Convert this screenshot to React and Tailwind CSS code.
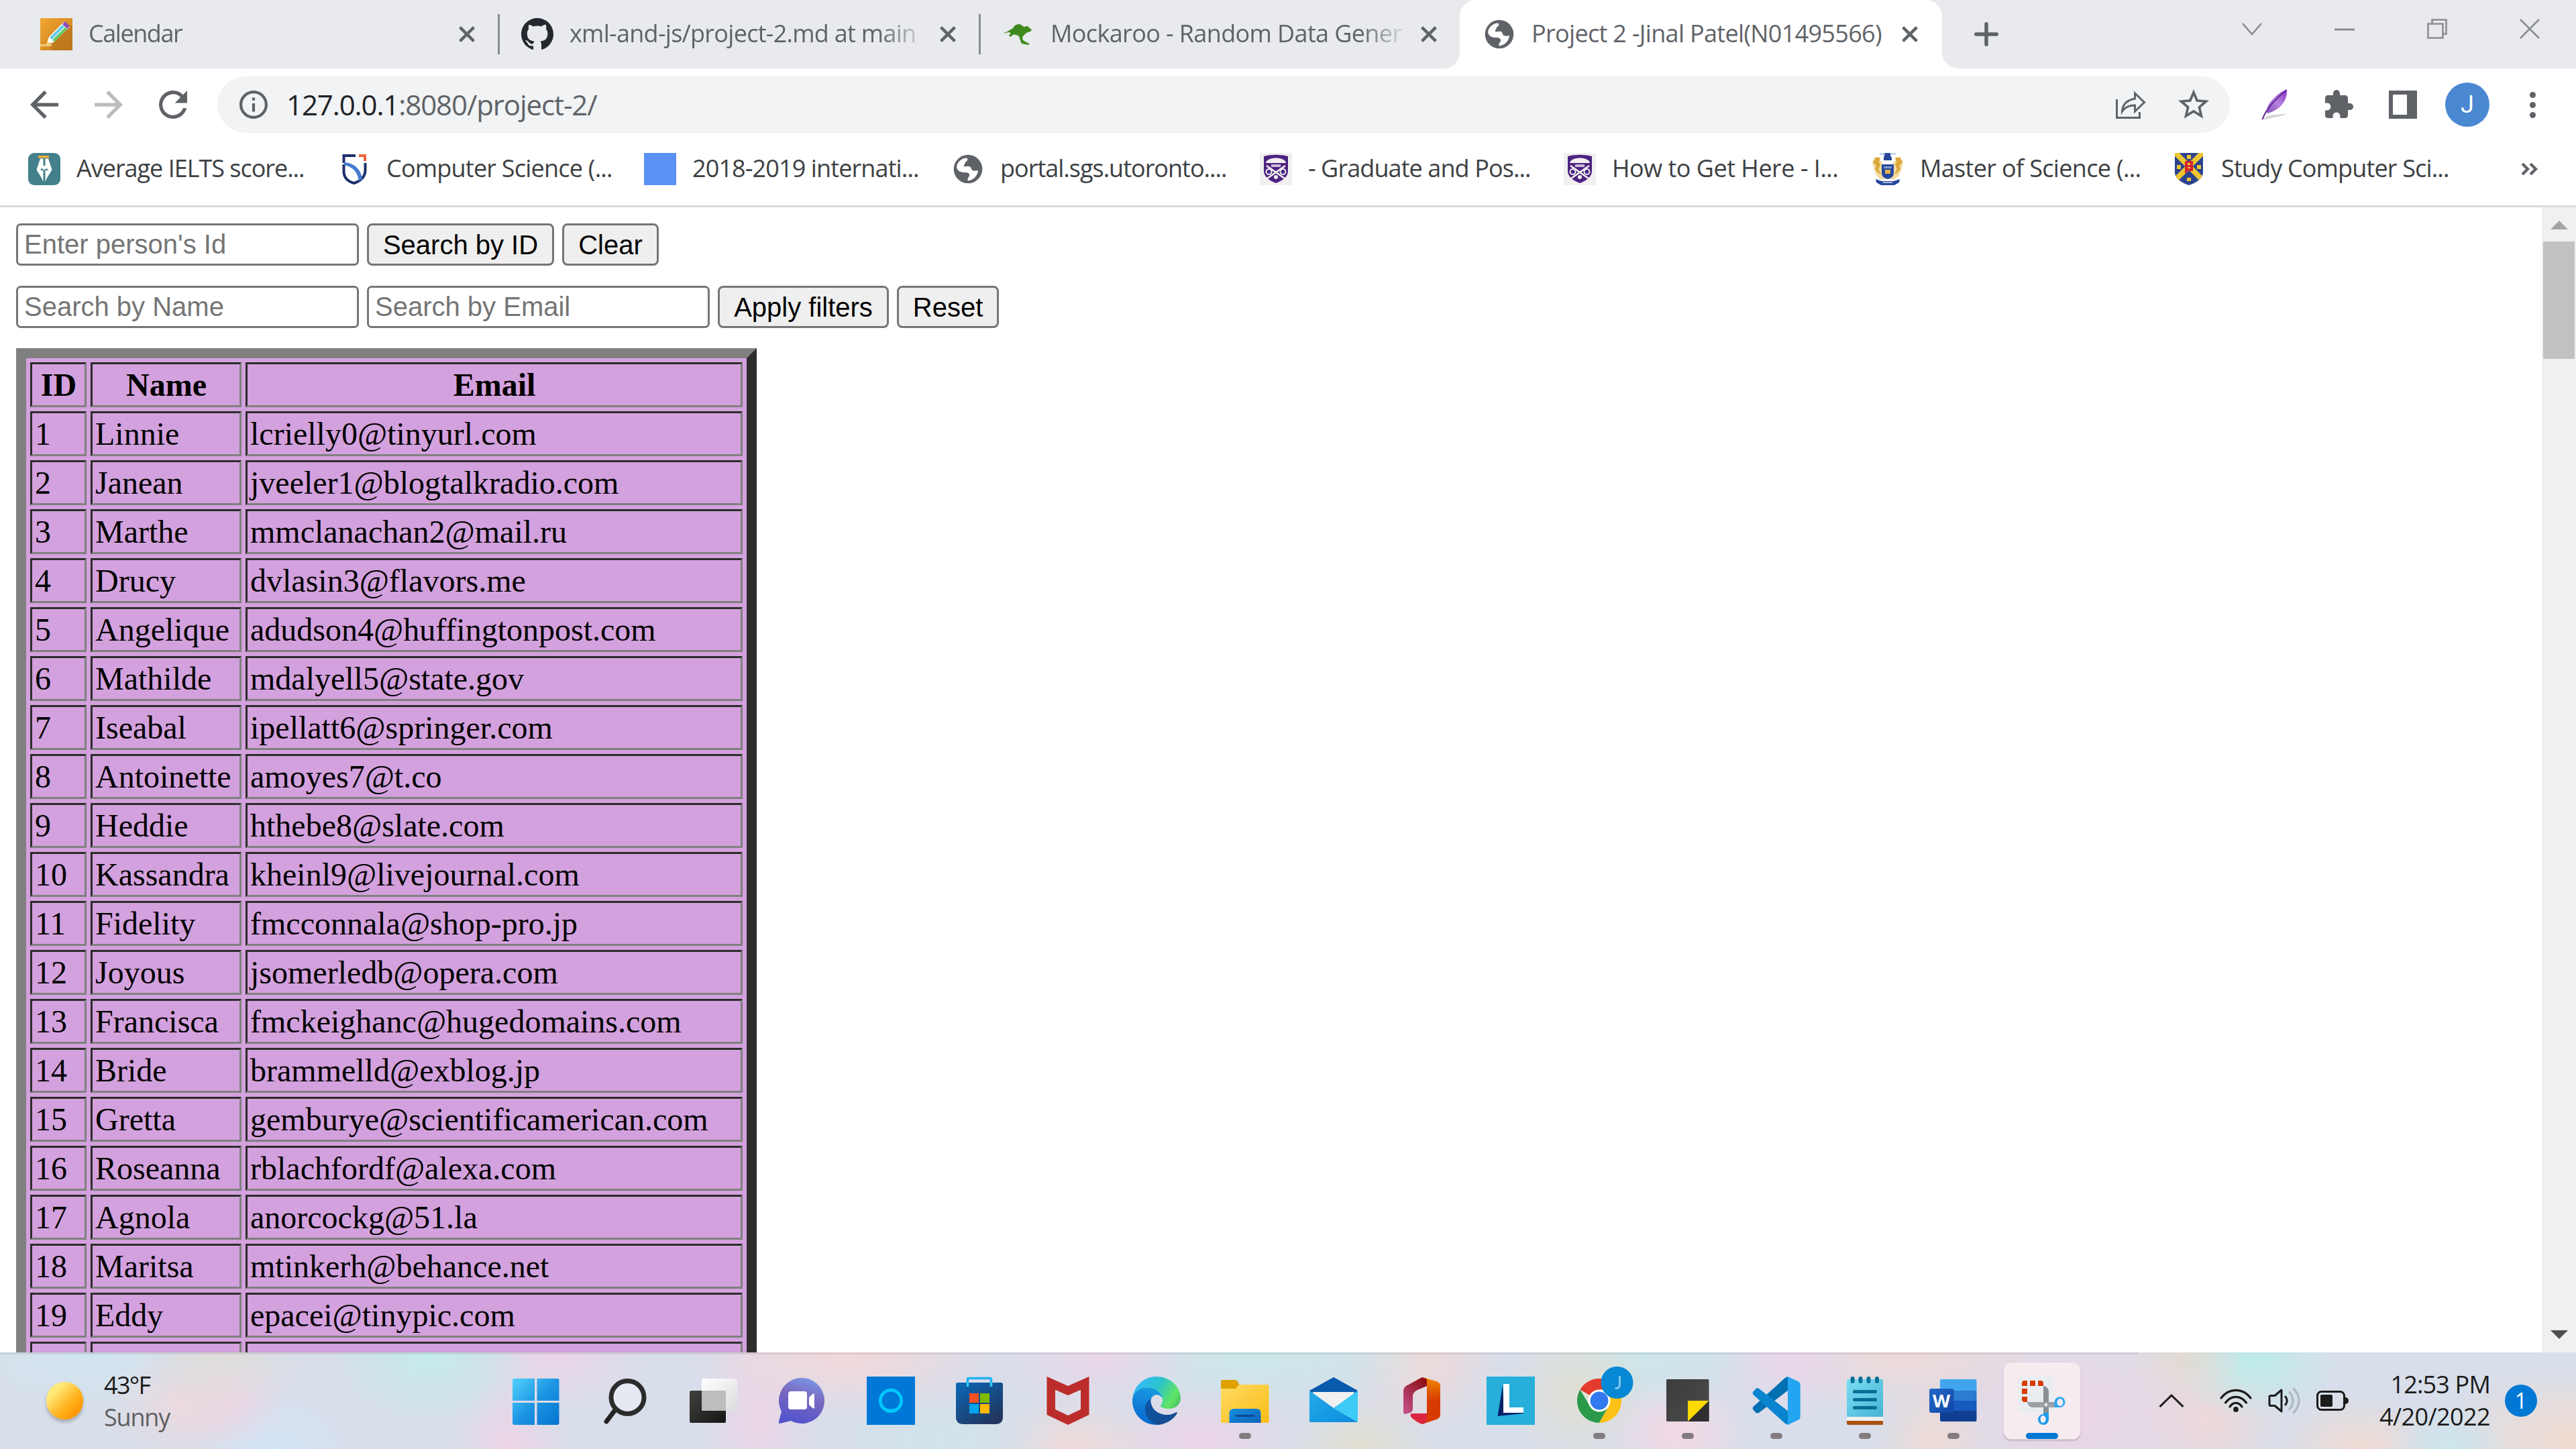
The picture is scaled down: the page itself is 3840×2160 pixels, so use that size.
import React from "react";

/* ---------- browser glyphs ---------- */

const Glyph = ({ box, className, d }) => (
  <svg viewBox={box} className={className} fill="currentColor">
    <path d={d} />
  </svg>
);

const CloseX = ({ className = "" }) => (
  <svg viewBox="0 0 24 24" className={"h-6 w-6 shrink-0 text-[#5f6368] " + className} fill="none" stroke="currentColor" strokeWidth="4.4">
    <path d="M1.6 1.6 22.4 22.4M22.4 1.6 1.6 22.4" />
  </svg>
);

const Globe = ({ className = "" }) => (
  <svg viewBox="0 0 48 48" className={"h-12 w-12 shrink-0 " + className}>
    <circle cx="24" cy="24" r="21.3" fill="#5f6368" />
    <path
      d="M7 21C8 13 15 7.500 22 7.500C24 9 24 11 21 13C19 14 20 17 18 18C17 20 19 21 22 20C26 19 29 21 29 24C30 27 34 27 39 26C38 34 33 40 24 41.500C22 39 25 37 26 34C27 31 24 29 19 29C13 29 8 27 7 21Z"
      fill="#fff"
    />
  </svg>
);

const PencilIcon = () => (
  <svg viewBox="0 0 48 48" className="h-12 w-12 shrink-0">
    <defs>
      <linearGradient id="pencilBg" x1="0" y1="0" x2="1" y2="1">
        <stop offset="0" stopColor="#f2a531" />
        <stop offset="1" stopColor="#c47c1d" />
      </linearGradient>
    </defs>
    <rect width="48" height="48" fill="url(#pencilBg)" />
    <path d="M10 39 44 10 48 14V48H18Z" fill="#b4701a" opacity=".6" />
    <path d="M0 40.500H17" stroke="#f4c67c" strokeWidth="3" />
    <path d="M9 40 13 28 36 5 44 13 20 36Z" fill="#fff" />
    <path d="M15.500 30.500 34.500 11.500" stroke="#5fc9ee" strokeWidth="4" />
    <path d="M19.500 34 38.500 15" stroke="#66c661" strokeWidth="4" />
    <path d="M33 9 37 5 44 12 40 16Z" fill="#8e4bb8" />
    <path d="M9 40 11 34 15 38Z" fill="#f7d36b" />
  </svg>
);

const GithubIcon = () => (
  <Glyph
    box="0 0 16 16"
    className="h-12 w-12 shrink-0 text-[#24292f]"
    d="M8 0C3.580 0 0 3.580 0 8c0 3.540 2.290 6.530 5.470 7.590.4.070.55-.17.55-.38 0-.19-.01-.82-.01-1.490-2.010.37-2.530-.49-2.690-.94-.09-.23-.48-.94-.82-1.130-.28-.15-.68-.52-.01-.53.63-.01 1.080.58 1.230.82.72 1.210 1.870.87 2.330.66.070-.52.28-.87.51-1.070-1.780-.2-3.640-.89-3.640-3.950 0-.87.31-1.590.82-2.150-.08-.2-.36-1.020.08-2.120 0 0 .67-.21 2.200.82.64-.18 1.320-.27 2-.27.68 0 1.360.09 2 .27 1.530-1.040 2.200-.82 2.200-.82.44 1.100.16 1.920.08 2.120.51.56.82 1.270.82 2.150 0 3.070-1.870 3.750-3.650 3.950.29.25.54.73.54 1.480 0 1.070-.01 1.930-.01 2.200 0 .21.15.46.55.38A8.012 8.012 0 0 0 16 8c0-4.420-3.580-8-8-8z"
  />
);

const KangarooIcon = () => (
  <svg viewBox="0 0 48 48" className="h-12 w-12 shrink-0" fill="#3f8a1d">
    <path d="M3 22C9 20 12 17 16 15C18 11 21 9 26 9C29 10 31 13 34 13L36 12 38 12 41 15 44 17 42 20 38 21C35 22 34 24 32 26C30 27 30 30 31 33L40 38V40L29 38C27 34 26 30 25 27C22 25 19 24 16 25L12 28 10 26 13 22C11 21 8 21 3 23Z" />
  </svg>
);

/* ---------- tabs ---------- */

const Tab = ({ icon, label, divider = true, track, width }) => (
  <div className={"flex h-[102px] items-center " + width}>
    <div className={"mr-8 h-[60px] w-[3px] " + (divider ? "bg-[#8a8d91]" : "bg-transparent")} />
    {icon}
    <div className="mb-0.5 ml-[24px] w-[525px] overflow-hidden whitespace-nowrap leading-[60px] text-[#5f6368] [mask-image:linear-gradient(to_right,black_88%,transparent_102%)]">
      <span className={track}>{label}</span>
    </div>
    <CloseX className="ml-[27px]" />
  </div>
);

const WinButton = ({ children }) => (
  <div className="flex h-[86px] w-[138px] items-center justify-center">
    <svg viewBox="0 0 30 30" className="h-[30px] w-[30px]" fill="none" stroke="#8b8d90" strokeWidth="2.600">
      {children}
    </svg>
  </div>
);

const TabStrip = () => (
  <div className="flex h-[102px] bg-[#e8eaed] pl-[25px] text-[36px]">
    <Tab icon={<PencilIcon />} label="Calendar" divider={false} track="tracking-[-1.44px]" width="w-[717px]" />
    <Tab icon={<GithubIcon />} label="xml-and-js/project-2.md at main" track="tracking-[-0.72px]" width="w-[717px]" />
    <Tab icon={<KangarooIcon />} label="Mockaroo - Random Data Genera" track="tracking-[-0.62px]" width="w-[717px]" />
    <div className="relative flex h-[102px] w-[719px] items-center rounded-t-[24px] bg-white pl-[35px]">
      <svg viewBox="0 0 24 24" className="absolute -left-6 bottom-0 h-6 w-6" fill="#fff">
        <path d="M24 0A24 24 0 0 1 0 24H24Z" />
      </svg>
      <svg viewBox="0 0 24 24" className="absolute -right-6 bottom-0 h-6 w-6" fill="#fff">
        <path d="M0 0A24 24 0 0 0 24 24H0Z" />
      </svg>
      <Globe />
      <div className="mb-0.5 ml-[24px] w-[528px] whitespace-nowrap leading-[60px] tracking-[-0.68px] text-[#5f6368]">
        Project 2 -Jinal Patel(N01495566)
      </div>
      <CloseX className="ml-[24px]" />
    </div>
    <svg viewBox="0 0 36 36" className="ml-12 h-9 w-9 self-center" stroke="#5f6368" strokeWidth="5.500" strokeLinecap="round">
      <path d="M18 2.700V33.300M2.700 18H33.300" />
    </svg>
    <div className="ml-auto flex">
      <WinButton><path d="M1 7 15 23 29 7" /></WinButton>
      <WinButton><path d="M0 16H30" strokeWidth="3" /></WinButton>
      <WinButton>
        <path d="M1.500 7.500H23.500V28.500H1.500ZM7.500 7V1.500H28.500V22.500H24" />
      </WinButton>
      <WinButton><path d="M1 1 29 29M29 1 1 29" /></WinButton>
    </div>
  </div>
);

/* ---------- toolbar ---------- */

const Toolbar = () => (
  <div className="flex h-[108px] items-center bg-white pl-[45px] text-[#5f6368]">
    <Glyph box="4 4 16 16" className="h-[42px] w-[42px]" d="M20 11H7.830l5.590-5.590L12 4l-8 8 8 8 1.410-1.410L7.830 13H20v-2z" />
    <Glyph box="4 4 16 16" className="ml-[54px] h-[42px] w-[42px] text-[#babcbe]" d="M12 4l-1.410 1.410L16.170 11H4v2h12.170l-5.580 5.590L12 20l8-8z" />
    <Glyph box="4 4 16 16" className="ml-[54px] h-[42px] w-[42px]" d="M17.650 6.350A7.958 7.958 0 0 0 12 4c-4.420 0-7.990 3.580-7.990 8s3.570 8 7.990 8c3.730 0 6.840-2.550 7.730-6h-2.080A5.990 5.990 0 0 1 12 18c-3.310 0-6-2.690-6-6s2.690-6 6-6c1.660 0 3.140.69 4.220 1.780L13 11h7V4l-2.350 2.350z" />
    <div className="ml-[45px] flex h-[84px] w-[3000px] items-center rounded-full bg-[#f1f3f4] pl-[33px] pr-[31px]">
      <Glyph box="2 2 20 20" className="h-[42px] w-[42px]" d="M11 7h2v2h-2V7zm0 4h2v6h-2v-6zm1-9C6.480 2 2 6.480 2 12s4.480 10 10 10 10-4.480 10-10S17.520 2 12 2zm0 18c-4.410 0-8-3.590-8-8s3.590-8 8-8 8 3.590 8 8-3.590 8-8 8z" />
      <div className="mb-px ml-[28px] text-[42px] leading-[60px] tracking-[-1.1px]">
        <span className="text-[#202124]">127.0.0.1</span>
        <span>:8080/project-2/</span>
      </div>
      <svg viewBox="0 0 48 48" className="ml-auto h-12 w-12" fill="none" stroke="currentColor" strokeWidth="3">
        <path d="M3.500 16V43.500H37.500V35" />
        <path d="M30.500 7V15C20 17 12 23 11.500 34C16 27 22 25 30.500 25V34L44.500 20.500Z" strokeLinejoin="miter" />
      </svg>
      <Glyph box="2 2 20 20" className="ml-[47px] h-[46px] w-[46px]" d="M22 9.240l-7.190-.62L12 2 9.190 8.630 2 9.240l5.460 4.730L5.820 21 12 17.270 18.180 21l-1.630-7.030L22 9.240zM12 15.400l-3.760 2.270 1-4.280-3.320-2.880 4.380-.38L12 6.100l1.710 4.040 4.380.38-3.320 2.880 1 4.280L12 15.400z" />
    </div>
    <svg viewBox="0 0 48 48" className="ml-[42px] h-12 w-12">
      <defs>
        <linearGradient id="feather" x1="1" y1="0" x2="0" y2="1">
          <stop offset="0" stopColor="#8a35c4" />
          <stop offset=".5" stopColor="#b583dc" />
          <stop offset="1" stopColor="#8a50c0" />
        </linearGradient>
      </defs>
      <path d="M8 46C16 37 26 40 43 37C35 43 22 42 8 47Z" fill="#d6d6d9" />
      <path d="M43 1C44 17 35 31 14 37C11 34 14 25 21 17C28 9 36 4 43 1Z" fill="url(#feather)" />
      <path d="M42 3C29 13 13 28 6.500 46" fill="none" stroke="#6a2aa2" strokeWidth="2.200" />
    </svg>
    <Glyph box="0 0 24 24" className="ml-[48px] h-12 w-12" d="M20.500 11H19V7c0-1.100-.9-2-2-2h-4V3.500C13 2.120 11.880 1 10.500 1S8 2.120 8 3.500V5H4c-1.100 0-1.990.9-1.990 2v3.800H3.500c1.490 0 2.700 1.210 2.700 2.700s-1.210 2.700-2.700 2.700H2V20c0 1.100.9 2 2 2h3.800v-1.500c0-1.490 1.210-2.700 2.700-2.700 1.490 0 2.700 1.210 2.700 2.700V22H17c1.100 0 2-.9 2-2v-4h1.500c1.380 0 2.500-1.120 2.500-2.500S21.880 11 20.500 11z" />
    <div className="ml-[51px] h-[42px] w-[42px] border-y-[6px] border-l-[6px] border-r-[15px] border-[#5f6368]" />
    <div className="ml-[42px] flex h-[66px] w-[66px] items-center justify-center rounded-full bg-[#4a88d2] font-['Roboto',sans-serif] text-[36px] text-white">J</div>
    <div className="ml-[60px] flex flex-col gap-[6px]">
      <div className="h-[9px] w-[9px] rounded-full bg-[#5f6368]" />
      <div className="h-[9px] w-[9px] rounded-full bg-[#5f6368]" />
      <div className="h-[9px] w-[9px] rounded-full bg-[#5f6368]" />
    </div>
  </div>
);

/* ---------- bookmarks ---------- */

const NibIcon = () => (
  <svg viewBox="0 0 48 48" className="h-12 w-12 shrink-0">
    <rect width="48" height="48" rx="9" fill="#43808c" />
    <path d="M15 4H31V7.500H15Z" fill="#efb13a" />
    <path d="M18 8.500H22.500V20L18 26H22.500V43C20 36 15 30 12.500 25Z" fill="#fff" />
    <path d="M30 8.500H25.500V20L30 26H25.500V43C28 36 33 30 35.500 25Z" fill="#fff" />
    <circle cx="24" cy="22" r="3" fill="#fff" />
  </svg>
);

const CrestIcon = () => (
  <svg viewBox="0 0 48 48" className="h-12 w-12 shrink-0" fill="none">
    <path d="M26 4H8.500V15" stroke="#1d2f6b" strokeWidth="4" />
    <path d="M31 2H42V12H38V6H31Z" fill="#f0643c" />
    <path d="M8.500 17V28C9 38 16 43 24 45C33 42 40 37 40.500 26V15" stroke="#1d2f6b" strokeWidth="4" />
    <path d="M9 14C24 15 34 24 36 39L31 42C29 28 22 21 9 18Z" fill="#4479d0" />
  </svg>
);

const BlueSquare = () => <div className="h-12 w-12 shrink-0 bg-[#5b90f5]" />;

const PurpleShield = () => (
  <svg viewBox="0 0 48 48" className="h-12 w-12 shrink-0">
    <rect width="48" height="48" fill="#f2eff0" />
    <path d="M6 5C16 2 32 2 42 5V28C41 37 32 42 24 45C16 42 7 37 6 28Z" fill="#4b2380" />
    <path d="M9 15C10 5 38 5 39 15Z" fill="#f2eff0" />
    <path d="M17 17H31V21H17Z" fill="#cbbbe0" />
    <path d="M10 19 37 38M38 19 11 38" stroke="#f2eff0" strokeWidth="2.600" />
    <circle cx="13.500" cy="28" r="4" fill="none" stroke="#f2eff0" strokeWidth="2" />
    <circle cx="34.500" cy="28" r="4" fill="none" stroke="#f2eff0" strokeWidth="2" />
    <circle cx="24" cy="36" r="3" fill="#f2eff0" />
  </svg>
);

const GoldCrest = () => (
  <svg viewBox="0 0 48 48" className="h-12 w-12 shrink-0">
    <path d="M12 0H36V3H12Z" fill="#c4d4ec" />
    <path d="M20 0H28V4L30 7V11H18V7Z" fill="#27489b" />
    <path d="M5 6H13V12L16 14V32L20 38 15 40 8 35 4 26 1 14Z" fill="#f3dca0" />
    <path d="M43 6H35V12L32 14V32L28 38 33 40 40 35 44 26 47 14Z" fill="#f3dca0" />
    <path d="M6 7H12L11 14 13 18 10 24 14 31 10 30 5 24 7 19 2 14Z" fill="#dca83c" />
    <path d="M42 7H36L37 14 35 18 38 24 34 31 38 30 43 24 41 19 46 14Z" fill="#dca83c" />
    <path d="M15 17H33V30C33 35 29 38 24 39C19 38 15 35 15 30Z" fill="#27489b" />
    <path d="M18 20H30V23H18Z" fill="#7c98d4" />
    <rect x="20" y="25" width="8" height="6" fill="#e0b04a" />
    <path d="M6 39 15 42H33L42 39 41 44 34 48H14L7 44Z" fill="#27489b" />
    <path d="M17 43H31V45H17Z" fill="#a9bde2" />
  </svg>
);

const SaltireShield = () => (
  <svg viewBox="0 0 48 48" className="h-12 w-12 shrink-0">
    <clipPath id="saltire"><path d="M3 0H45V30C44 39 34 45 24 48C14 45 4 39 3 30Z" /></clipPath>
    <g clipPath="url(#saltire)">
      <rect width="48" height="48" fill="#2b438f" />
      <path d="M3 -1 45 41M45 -1 3 41" stroke="#edc531" strokeWidth="8" />
      <path d="M21 3H27V9H21ZM6 18H12V24H6ZM36 18H42V24H36ZM21 37H27V42H21Z" fill="#edc531" />
      <path d="M18 12H30V27H21V30H18Z" fill="#d8232e" />
      <path d="M22 15H26V18H22ZM22 21H26V23H22Z" fill="#edc531" />
    </g>
  </svg>
);

const BOOKMARKS = [
  [NibIcon, "Average IELTS score...", "w-[462px]", "tracking-[-1.02px]"],
  [CrestIcon, "Computer Science (...", "w-[456px]", "tracking-[-0.78px]"],
  [BlueSquare, "2018-2019 internati...", "w-[459px]", "tracking-[-0.88px]"],
  [Globe, "portal.sgs.utoronto....", "w-[459px]", "tracking-[-1px]"],
  [PurpleShield, "- Graduate and Pos...", "w-[453px]", "tracking-[-0.91px]"],
  [PurpleShield, "How to Get Here - I...", "w-[459px]", "tracking-[-0.5px]"],
  [GoldCrest, "Master of Science (...", "w-[447px]", "tracking-[-0.66px]"],
  [SaltireShield, "Study Computer Sci...", "w-[521px] pl-0.5", "tracking-[-0.85px]"],
];

const Bookmarks = () => (
  <div className="flex h-[99px] items-center border-b-[3px] border-[#d9dbde] bg-white pb-3 pl-[42px] text-[36px] text-[#3c4043]">
    {BOOKMARKS.map(([Icon, label, width, track]) => (
      <div key={label} className={"flex items-center " + width}>
        <Icon />
        <span className={"mb-0.5 ml-[24px] whitespace-nowrap leading-[48px] " + track}>{label}</span>
      </div>
    ))}
    <svg viewBox="0 0 26 18" className="h-[18px] w-[26px]" fill="none" stroke="#5f6368" strokeWidth="4.200">
      <path d="M2 1 10 9 2 17M14 1 22 9 14 17" />
    </svg>
  </div>
);

/* ---------- page ---------- */

const PEOPLE = [
  ["1", "Linnie", "lcrielly0@tinyurl.com"],
  ["2", "Janean", "jveeler1@blogtalkradio.com"],
  ["3", "Marthe", "mmclanachan2@mail.ru"],
  ["4", "Drucy", "dvlasin3@flavors.me"],
  ["5", "Angelique", "adudson4@huffingtonpost.com"],
  ["6", "Mathilde", "mdalyell5@state.gov"],
  ["7", "Iseabal", "ipellatt6@springer.com"],
  ["8", "Antoinette", "amoyes7@t.co"],
  ["9", "Heddie", "hthebe8@slate.com"],
  ["10", "Kassandra", "kheinl9@livejournal.com"],
  ["11", "Fidelity", "fmcconnala@shop-pro.jp"],
  ["12", "Joyous", "jsomerledb@opera.com"],
  ["13", "Francisca", "fmckeighanc@hugedomains.com"],
  ["14", "Bride", "brammelld@exblog.jp"],
  ["15", "Gretta", "gemburye@scientificamerican.com"],
  ["16", "Roseanna", "rblachfordf@alexa.com"],
  ["17", "Agnola", "anorcockg@51.la"],
  ["18", "Maritsa", "mtinkerh@behance.net"],
  ["19", "Eddy", "epacei@tinypic.com"],
  ["", "", ""],
];

const cell = "h-[67px] border-[3px] border-t-[#2c2c2c] border-l-[#2c2c2c] border-r-[#808080] border-b-[#808080] py-[3px] pl-1 pr-[3px] leading-[55px] whitespace-nowrap";

const Field = ({ hint }) => (
  <input
    placeholder={hint}
    className="h-[63px] w-[511px] rounded-[7px] border-[3px] border-[#767676] bg-white pl-[9px] text-[40px] leading-[48px] placeholder:text-[#757575]"
  />
);

const Btn = ({ width, children }) => (
  <button className={"flex h-[63px] items-center justify-center rounded-[8px] border-[3px] border-[#767676] bg-[#efefef] text-[40px] leading-[48px] text-black " + width}>
    {children}
  </button>
);

const Page = () => (
  <div className="flex h-[1707px] overflow-hidden bg-white">
    <div className="grow p-6 font-['Liberation_Sans',Arial,sans-serif]">
      <div className="flex gap-3">
        <Field hint="Enter person's Id" />
        <Btn width="w-[279px]">Search by ID</Btn>
        <Btn width="w-[144px]">Clear</Btn>
      </div>
      <div className="mt-[30px] flex gap-3">
        <Field hint="Search by Name" />
        <Field hint="Search by Email" />
        <Btn width="w-[255px]">Apply filters</Btn>
        <Btn width="w-[152px]">Reset</Btn>
      </div>
      <table className="mt-[30px] w-[1104px] table-fixed border-separate border-spacing-[6px] border-[15px] border-t-[#808080] border-l-[#808080] border-r-[#2c2c2c] border-b-[#2c2c2c] bg-[#d3a1dd] font-['Liberation_Serif','Times_New_Roman',serif] text-[48px] text-black">
        <thead>
          <tr>
            <th className={"w-[84px] " + cell}>ID</th>
            <th className={"w-[225px] " + cell}>Name</th>
            <th className={"w-[741px] " + cell}>Email</th>
          </tr>
        </thead>
        <tbody>
          {PEOPLE.map(([id, name, email], i) => (
            <tr key={i}>
              <td className={cell}>{id}</td>
              <td className={cell}>{name}</td>
              <td className={cell}>{email}</td>
            </tr>
          ))}
        </tbody>
      </table>
    </div>
    <div className="flex w-[51px] shrink-0 flex-col items-center bg-[#f0f0f0]">
      <svg viewBox="0 0 26 13" className="mt-5 h-[13px] w-[26px]" fill="#a3a3a3"><path d="M13 0 26 13H0Z" /></svg>
      <div className="mt-[18px] h-[175px] w-[47px] bg-[#c1c1c1]" />
      <svg viewBox="0 0 26 13" className="mb-5 mt-auto h-[13px] w-[26px]" fill="#505050"><path d="M13 13 26 0H0Z" /></svg>
    </div>
  </div>
);

/* ---------- taskbar icons, each drawn in a 72px box ---------- */

const Grad = ({ id, from, to, x1 = 0, y1 = 0, x2 = 1, y2 = 1 }) => (
  <linearGradient id={id} x1={x1} y1={y1} x2={x2} y2={y2}>
    <stop offset="0" stopColor={from} />
    <stop offset="1" stopColor={to} />
  </linearGradient>
);

const ICONS = [
  {
    name: "start",
    art: (
      <>
        <linearGradient id="winG" gradientUnits="userSpaceOnUse" x1="0" y1="3" x2="70" y2="72">
          <stop offset="0" stopColor="#50d2fd" />
          <stop offset=".5" stopColor="#1d95e3" />
          <stop offset="1" stopColor="#0574d1" />
        </linearGradient>
        <path d="M3 3H33V36H0V6Q0 3 3 3ZM36.500 3H66.500Q69.500 3 69.500 6V36H36.500ZM0 39H33V72H3Q0 72 0 69ZM36.500 39H69.500V69Q69.500 72 66.500 72H36.500Z" fill="url(#winG)" />
      </>
    ),
  },
  {
    name: "search",
    art: (
      <>
        <path d="M23 47 8 67" stroke="#222" strokeWidth="7" strokeLinecap="round" />
        <circle cx="39.500" cy="31" r="24.500" fill="#e6e8f2" stroke="#2b2b2b" strokeWidth="7" />
      </>
    ),
  },
  {
    name: "task view",
    art: (
      <>
        <Grad id="tvD" from="#42423f" to="#151515" />
        <Grad id="tvL" from="#ffffff" to="#dcdcdc" />
        <rect x="0" y="21" width="54" height="48" rx="2.500" fill="url(#tvD)" />
        <rect x="18" y="3" width="53" height="48" rx="2.500" fill="url(#tvL)" />
        <path d="M18 21H54V51H20.500Q18 51 18 48.500Z" fill="#bdbdbd" />
      </>
    ),
  },
  {
    name: "chat",
    art: (
      <>
        <linearGradient id="chatG" x1=".8" y1="0" x2=".5" y2="1">
          <stop offset="0" stopColor="#7b9bea" />
          <stop offset=".45" stopColor="#7a68c0" />
          <stop offset="1" stopColor="#5455cc" />
        </linearGradient>
        <path d="M35 2A34 34 0 1 1 19 66L3 70Q0 70 1 67L5 52A34 34 0 0 1 35 2Z" fill="url(#chatG)" />
        <rect x="15" y="22" width="28" height="27" rx="4" fill="#fff" />
        <path d="M46 31 52 25.500Q54 25 54 27V46Q54 48 52 47.500L46 42Z" fill="#fff" />
      </>
    ),
  },
  {
    name: "alexa",
    art: (
      <>
        <rect width="72" height="72" fill="#0078d7" />
        <circle cx="36" cy="36" r="15.700" fill="none" stroke="#00caff" strokeWidth="4.600" />
        <path d="M28 47C31 52 34 52 34 54L40 51 42 47 37 49Z" fill="#00caff" />
      </>
    ),
  },
  {
    name: "store",
    art: (
      <>
        <Grad id="stG" from="#0a68b8" to="#22365f" x2=".7" />
        <path d="M18.500 14V4Q18.500 2.500 20 2.500H52Q53.500 2.500 53.500 4V14" fill="none" stroke="#22b4f2" strokeWidth="3.600" />
        <path d="M4 9H68Q71 9 71 12V60Q71 71 60 71H12Q1 71 1 60V12Q1 9 4 9Z" fill="url(#stG)" />
        <path d="M18.500 9V15M53.500 9V15" stroke="#2fcbf5" strokeWidth="3.600" />
        <path d="M21 25H35V39H21Z" fill="#f25022" />
        <path d="M37 25H51V39H37Z" fill="#7fba00" />
        <path d="M21 41H35V55H21Z" fill="#00a4ef" />
        <path d="M37 41H51V55H37Z" fill="#ffb900" />
      </>
    ),
  },
  {
    name: "mcafee",
    art: <path fillRule="evenodd" d="M4.500 0 36 14 67.500 0V57L36 72 4.500 57ZM17 19.700V49L36 58 55 49V19.700L36 28Z" fill="#bc2c2b" />,
  },
  {
    name: "edge",
    art: (
      <>
        <Grad id="edB" from="#1a9ae0" to="#0667cf" x1=".6" y1="0" x2=".4" y2="1" />
        <Grad id="edD" from="#0d56a6" to="#154a8f" />
        <linearGradient id="edG" x1="0" y1=".3" x2="1" y2=".7">
          <stop offset="0" stopColor="#38b9fb" />
          <stop offset=".45" stopColor="#2cc3cf" />
          <stop offset=".85" stopColor="#5fe561" />
          <stop offset="1" stopColor="#4fc765" />
        </linearGradient>
        <path d="M0 36C0 27 6 19 17 16C30 14 44 22 45 33C43 29 40 27 36.500 27C31 27 27 32 27 38L32 52 46 70C43 71.500 40 72 36 72C16 72 0 56 0 36Z" fill="url(#edB)" />
        <path d="M27.500 33C21 37 18 44 19 51C20.500 62 29 72 41 71.500C53 70 63 62 67 54.500Q67 52.500 64.500 53.500C59 56.500 55 57 50 57C37 56 26 47 27.500 33Z" fill="url(#edD)" />
        <path d="M0.500 31C3 13 18 0 36 0C57 0 72 16 72 32C72 42 64 48 55 48C48 48 42 46 42 43.500C42 42 45 40 45 36C45 26 37 17 25 17C13 16 5 20 0.500 31Z" fill="url(#edG)" />
      </>
    ),
  },
  {
    name: "explorer",
    run: true,
    art: (
      <>
        <Grad id="foY" from="#ffdb66" to="#fbbd13" />
        <Grad id="foB" from="#1490df" to="#0f62b8" />
        <path d="M2 5H20Q24 5 26 9L28 14V18H0V7Q0 5 2 5Z" fill="#dfa000" />
        <path d="M0 18H22Q26 12 30 12H69.500Q71.500 12 71.500 14V67Q71.500 69 69.500 69H2Q0 69 0 67Z" fill="url(#foY)" />
        <path d="M12.500 69V55Q12.500 48 19 48H53Q59.500 48 59.500 55V69Z" fill="url(#foB)" />
        <path d="M22.500 58.500H49" stroke="#0b4a93" strokeWidth="3" strokeLinecap="round" />
      </>
    ),
  },
  {
    name: "mail",
    art: (
      <>
        <Grad id="maA" from="#27ace8" to="#0a8ade" />
        <path d="M36 1 72 21V34H0V21Z" fill="#0a5aad" />
        <path d="M5 23H66.500V30L36 46 5 30Z" fill="#f1f1f1" />
        <path d="M0 21 36 47 72 68H2Q0 68 0 66Z" fill="url(#maA)" />
        <path d="M72 21V68L36 47Z" fill="#3dcaf6" />
      </>
    ),
  },
  {
    name: "office",
    art: (
      <>
        <Grad id="ofR" from="#8d0f12" to="#c2528d" x1=".8" y1="0" x2=".1" y2="1" />
        <Grad id="ofO" from="#f28a00" to="#d83b01" x2="0" y2=".5" />
        <path d="M36 1 43 3V14L29 20Q22 23 22 30V48Q22 52 18 54L11 56Q8 56 8 52V22Q8 17 12 14Z" fill="url(#ofR)" />
        <path d="M36 1 57 7Q63 9 63 14V57Q63 62 57 64L36 71 43 63V4Z" fill="url(#ofO)" />
        <path d="M20 55H43V66Q41 70 36 71C30 69 24 65 20 61Q17 57 20 55Z" fill="#dd2540" />
      </>
    ),
  },
  {
    name: "L",
    art: (
      <>
        <rect width="72" height="72" fill="#27aedb" />
        <path d="M24 13 16.500 59 55 55V50H26Z" fill="#04246a" />
        <path d="M25 11H34V46H55V54H25Z" fill="#fff" />
      </>
    ),
  },
  {
    name: "chrome",
    run: true,
    art: (
      <>
        <path d="M36 36 7.400 19.500A33 33 0 0 1 64.600 19.500H36Z" fill="#e33b2e" />
        <path d="M7.400 19.500A33 33 0 0 0 36 69L50 44 22 44Z" fill="#2a9a49" />
        <path d="M64.600 19.500A33 33 0 0 1 36 69L51 43 36 19.500Z" fill="#fbc116" />
        <circle cx="36" cy="36" r="16.500" fill="#fff" />
        <circle cx="36" cy="36" r="13.400" fill="#3079ee" />
        <circle cx="62.500" cy="9" r="24" fill="#0688d4" />
        <path d="M66.500 -1V12Q66.500 18 59.500 17.500" fill="none" stroke="#7cc4ec" strokeWidth="3.200" />
      </>
    ),
  },
  {
    name: "sticky",
    run: true,
    art: (
      <>
        <Grad id="snG" from="#3c3c3c" to="#4c4c4c" />
        <rect x="4" y="4" width="63.500" height="63" rx="1.500" fill="url(#snG)" />
        <path d="M36 67V36H67.500V67Z" fill="#2e2e2e" />
        <path d="M36 67V36H67.500Z" fill="#ffd800" />
      </>
    ),
  },
  {
    name: "vscode",
    run: true,
    art: (
      <>
        <path d="M53 0 54 20 10 54Q7 55.500 5 53.500L1 49Q0 47 1.500 45L49 2Z" fill="#0070b3" />
        <path d="M53 72 54 52 10 18Q7 16.500 5 18.500L1 23Q0 25 1.500 27L49 70Z" fill="#0a84cf" />
        <path d="M53 0 69 7.500Q71.700 9 71.700 12V60Q71.700 63 69 64.500L53 72Z" fill="#24a5f2" />
      </>
    ),
  },
  {
    name: "notepad",
    run: true,
    art: (
      <>
        <Grad id="npG" from="#7cdcf4" to="#46b4d4" />
        <path d="M9 50H63V72H11Q9 72 9 70Z" fill="#ab520d" />
        <path d="M9 56H63V66H9Z" fill="#efefef" />
        <path d="M11 4H61Q63 4 63 6V60H9V6Q9 4 11 4Z" fill="url(#npG)" />
        <path d="M17.600 3V7M29.500 3V7M41.500 3V7M54 3V7" stroke="#076f95" strokeWidth="6" strokeLinecap="round" />
        <path d="M20.500 22.500H51.500M20.500 34.500H51.500M20.500 46.500H51.500" stroke="#076f95" strokeWidth="5" strokeLinecap="round" />
      </>
    ),
  },
  {
    name: "word",
    run: true,
    art: (
      <>
        <Grad id="woG" from="#2368c6" to="#1146a5" />
        <path d="M18 4H68.500Q70.500 4 70.500 6V21H16V6Q16 4 18 4Z" fill="#41a5ee" />
        <path d="M16 21H70.500V36H16Z" fill="#2b7cd3" />
        <path d="M16 36H70.500V51H16Z" fill="#185abd" />
        <path d="M16 51H70.500V65Q70.500 67 68.500 67H18Q16 67 16 65Z" fill="#103f91" />
        <rect x="0" y="18" width="36.500" height="36" rx="3" fill="url(#woG)" />
        <text x="18" y="46" textAnchor="middle" fontFamily="Open Sans" fontWeight="700" fontSize="27" fill="#fff">W</text>
      </>
    ),
  },
  {
    name: "snip",
    active: true,
    art: (
      <>
        <rect x="0" y="0" width="53.500" height="54" rx="4" fill="#e9edef" />
        <path d="M14 6V14H6V10Q6 6 10 6ZM18 6H26V14H18ZM30 6H34Q38 6 38 10V14H30ZM6 18H14V26H6ZM6 30H14V38H10Q6 38 6 34Z" fill="#d83b01" />
        <path d="M38 14Q46 15 46 23V54H38Z" fill="#8a8f96" />
        <path d="M14 38H55V46H22Q15 45 14 38Z" fill="#9aa0a6" />
        <circle cx="42" cy="42" r="2.200" fill="#eee" />
        <path d="M46 54V64A8 8 0 1 1 38 56V54ZM37.500 58A4 5.500 0 1 0 37.600 69A4 5.500 0 1 0 37.500 58Z" fillRule="evenodd" fill="#1e9de8" />
        <path d="M55 46H64A8 8 0 1 0 54.500 38V46ZM63 33A4.500 5.500 0 1 1 62.900 44A4.500 5.500 0 1 1 63 33Z" fillRule="evenodd" fill="#2aa7ee" />
      </>
    ),
  },
];

const TaskIcon = ({ art, run, active }) => (
  <div className="relative flex h-full w-[132px] flex-col items-center pt-9">
    {active && <div className="absolute left-2 top-[14px] h-[116px] w-[116px] rounded-[12px] border border-[#e2d3dc] bg-[#f6ecf0] shadow-[0_2px_2px_rgba(150,120,140,0.35)]" />}
    <svg viewBox="0 0 72 72" className="relative h-[72px] w-[72px] overflow-visible">{art}</svg>
    {run && <div className="mt-3 h-[9px] w-[18px] rounded-full bg-[#827c80]" />}
    {active && <div className="relative mt-3 h-[9px] w-12 rounded-full bg-[#0078d4]" />}
  </div>
);

const Taskbar = () => (
  <div className="relative flex h-36 overflow-hidden bg-[#d8deea] bg-[radial-gradient(130px_90px_at_330px_0px,#dfdcd9,transparent),radial-gradient(110px_80px_at_270px_80px,#ebd9de,transparent),radial-gradient(90px_70px_at_340px_70px,#ecd4e4,transparent),radial-gradient(200px_100px_at_130px_0px,#d1e5ef,transparent),radial-gradient(120px_90px_at_410px_144px,#d3e4f6,transparent),radial-gradient(150px_110px_at_640px_0px,#c3ebea,transparent),radial-gradient(90px_110px_at_760px_144px,#edd3e6,transparent),radial-gradient(140px_90px_at_830px_0px,#ebd5e8,transparent),radial-gradient(240px_100px_at_1260px_0px,#f3d7da,transparent),radial-gradient(90px_140px_at_1130px_100px,#ecd5e7,transparent),radial-gradient(180px_80px_at_1400px_130px,#d1e3ec,transparent),radial-gradient(130px_80px_at_1600px_144px,#f0d9d8,transparent),radial-gradient(160px_80px_at_1640px_10px,#e9d7e8,transparent),radial-gradient(150px_80px_at_1790px_130px,#ecd5e8,transparent),radial-gradient(300px_90px_at_1870px_0px,#cae8e9,transparent),radial-gradient(120px_110px_at_2120px_10px,#f0d8d8,transparent),radial-gradient(110px_80px_at_2030px_144px,#e1decf,transparent),radial-gradient(110px_110px_at_2350px_60px,#dfdfd3,transparent),radial-gradient(170px_90px_at_2450px_0px,#cbe7ea,transparent),radial-gradient(110px_90px_at_2500px_120px,#f3d8e4,transparent),radial-gradient(110px_90px_at_2670px_10px,#ead6ea,transparent),radial-gradient(220px_100px_at_2840px_0px,#efd9d8,transparent),radial-gradient(90px_80px_at_2880px_130px,#eedad4,transparent),radial-gradient(240px_160px_at_3090px_90px,#ecd5e4,transparent),radial-gradient(90px_80px_at_3250px_10px,#e0dcd0,transparent),radial-gradient(130px_90px_at_3360px_10px,#bcebe8,transparent),radial-gradient(120px_110px_at_3290px_100px,#eed8d8,transparent),radial-gradient(90px_70px_at_3650px_144px,#cbe6ec,transparent),radial-gradient(130px_80px_at_3520px_144px,#f0dad2,transparent),radial-gradient(200px_110px_at_3830px_130px,#f0dbd0,transparent)]">
    <div className="absolute left-0 top-0 h-[3px] w-[3188px] bg-black/8" />
    <div className="flex w-[734px] items-start pl-[69px]">
      <div className="mt-[44px] h-[56px] w-[55px] rounded-full bg-[linear-gradient(135deg,#ffe878_25%,#ffb21e_60%,#ff9500_85%)] shadow-[0_4px_5px_rgba(90,90,90,0.4)]" />
      <div className="ml-[31px] mt-[25px] text-[36px] leading-[48px]">
        <div className="tracking-[-1.7px] text-[#1b1b1b]">43°F</div>
        <div className="tracking-[-1.2px] text-[#5f5f5f]">Sunny</div>
      </div>
    </div>
    {ICONS.map((i) => <TaskIcon key={i.name} {...i} />)}
    <div className="flex h-36 grow items-center">
      <svg viewBox="0 0 38 20" className="ml-[108px] h-5 w-[38px]" fill="none" stroke="#1b1b1b" strokeWidth="3"><path d="M1.500 19 19 2 36.500 19" /></svg>
      <svg viewBox="0 0 48 36" className="ml-[53px] h-9 w-12" fill="none" stroke="#1b1b1b" strokeWidth="3.200" strokeLinecap="round">
        <path d="M2 14C14 -1.500 34 -1.500 46 14M8.500 21C17 9.500 31 9.500 39.500 21M15 27C20 19.500 28 19.500 33 27" />
        <circle cx="24" cy="31" r="2.300" fill="#1b1b1b" />
      </svg>
      <svg viewBox="0 0 48 40" className="ml-6 h-10 w-12" fill="none" stroke="#1b1b1b" strokeWidth="3" strokeLinecap="round" strokeLinejoin="round">
        <path d="M20 4V36L10 27.500H4Q2 27.500 2 25.500V14.500Q2 12.500 4 12.500H10Z" />
        <path d="M26 14Q30.500 20 26 26" />
        <path d="M32 7.500Q42 20 32 32.500M38 2Q54 20 38 38" stroke="#aeb6ba" />
      </svg>
      <svg viewBox="0 0 48 30" className="ml-6 h-[30px] w-12">
        <rect x="1.500" y="1.500" width="40" height="27" rx="6" fill="none" stroke="#1b1b1b" strokeWidth="3" />
        <rect x="6" y="6" width="18" height="18" rx="2" fill="#1b1b1b" />
        <path d="M42 10H44Q48 11 48 15Q48 19 44 20H42Z" fill="#1b1b1b" />
      </svg>
      <div className="mb-px ml-auto text-right text-[36px] leading-[48px] text-[#1b1b1b]">
        <div className="tracking-[-0.83px]">12:53 PM</div>
        <div className="tracking-[-0.6px]">4/20/2022</div>
      </div>
      <div className="ml-[22px] mr-[58px] flex h-12 w-12 items-center justify-center rounded-full bg-[#0078d4] text-[32px] leading-none text-white">1</div>
    </div>
  </div>
);

export default function App() {
  return (
    <div className="h-[2160px] w-[3840px] overflow-hidden bg-white font-['Open_Sans','Noto_Sans',sans-serif]">
      <TabStrip />
      <Toolbar />
      <Bookmarks />
      <Page />
      <Taskbar />
    </div>
  );
}
